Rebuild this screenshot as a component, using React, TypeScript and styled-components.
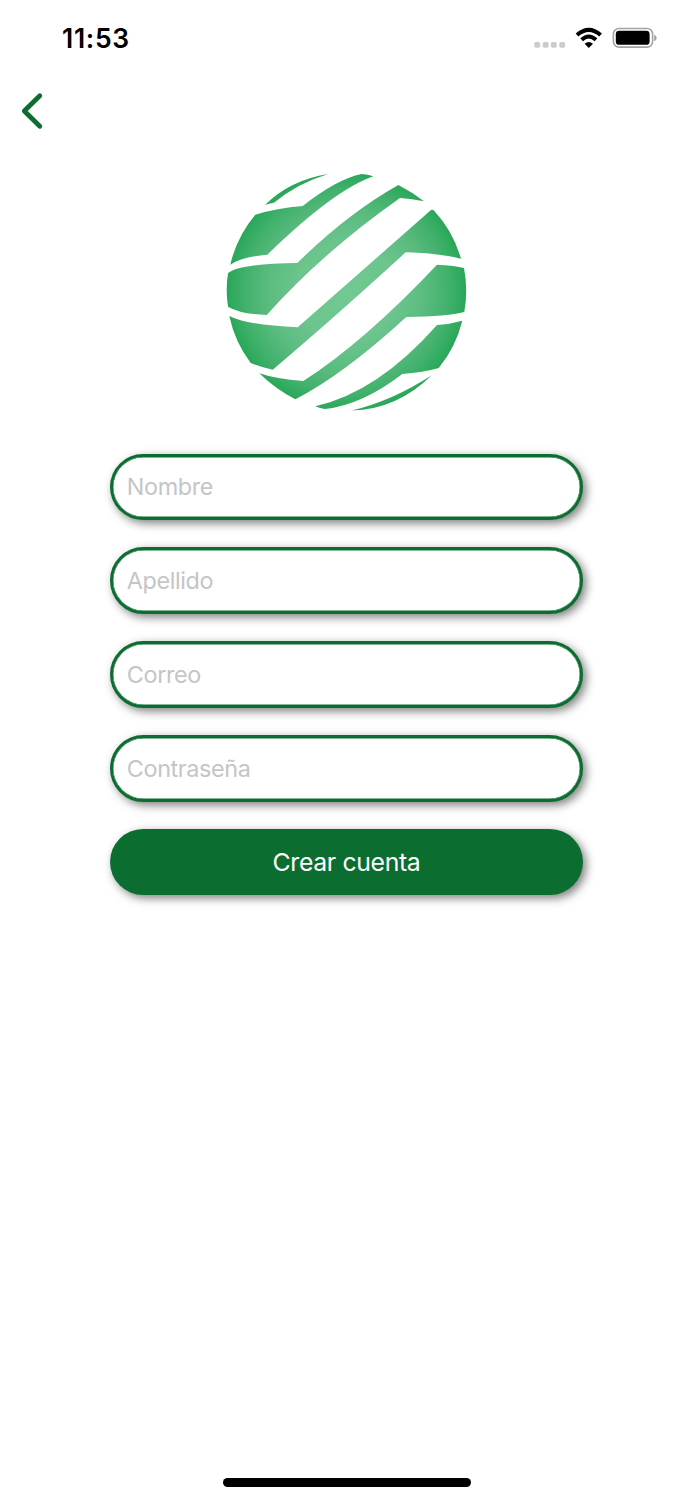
import React from "react";
import styled, { createGlobalStyle } from "styled-components";

const GREEN = "#0b6e30";
const FONT = `Inter, "Liberation Sans", sans-serif`;

const GlobalStyle = createGlobalStyle`
  *, *::before, *::after { box-sizing: border-box; }
  html, body { margin: 0; padding: 0; background: #fff; }
  body { font-family: ${FONT}; }
`;

const Screen = styled.main`
  width: 693px;
  height: 1500px;
  display: flex;
  flex-direction: column;
  overflow: hidden;
  background: #fff;
`;

const StatusBar = styled.header`
  height: 76px;
  padding: 0 36px 0 62px;
  display: flex;
  align-items: center;
  justify-content: space-between;
`;

const Clock = styled.time`
  font-size: 26.5px;
  line-height: 32px;
  font-weight: 600;
  letter-spacing: 0.7px;
  color: #000;
`;

const StatusIcons = styled.div`
  display: flex;
  align-items: center;
`;

const BackButton = styled.button`
  width: 60px;
  height: 70px;
  padding: 0 0 0 20px;
  border: 0;
  background: none;
  display: flex;
  align-items: center;
`;

const LogoArea = styled.div`
  margin-top: 27px;
  display: flex;
  justify-content: center;
`;

const Form = styled.form`
  width: 473.4px;
  margin: 41.5px auto 0;
  display: flex;
  flex-direction: column;
  gap: 26.8px;
`;

const Field = styled.input`
  width: 100%;
  height: 66.96px;
  padding: 0 14px;
  border: 3px solid ${GREEN};
  border-radius: 34px;
  background: #fff;
  box-shadow: inset 0 0 0 0.4px ${GREEN}, 3.3px 3.3px 10px rgba(0, 0, 0, 0.5);
  font-family: ${FONT};
  font-size: 23.4px;
  letter-spacing: -0.38px;
  outline: none;
  &::placeholder {
    color: #c5c5c6;
    opacity: 1;
  }
`;

const SubmitButton = styled.button`
  width: 100%;
  height: 66.96px;
  padding: 0;
  border: 0;
  border-radius: 34px;
  background: ${GREEN};
  box-shadow: 3.3px 3.3px 10px rgba(0, 0, 0, 0.5);
  color: #fff;
  font-family: ${FONT};
  font-size: 24.8px;
  letter-spacing: -0.35px;
`;

const HomeIndicator = styled.div`
  width: 248px;
  height: 8.5px;
  margin: auto auto 13.5px;
  border-radius: 5px;
  background: #000;
`;

const fields = [
  { label: "Nombre", type: "text" },
  { label: "Apellido", type: "text" },
  { label: "Correo", type: "email" },
  { label: "Contraseña", type: "password" },
];

const globeBands = [
  "M265 205 Q290 180 328.3 174 Q298 183 274 202.7 Q269 203.4 265 205Z",
  "M255.3 214.7 Q277 208 302.7 206 Q337 179 361.7 174 Q368 174.6 373.3 176.3 Q334 190 267.3 254.7 Q242 257 230.3 264.7 A120 120 0 0 1 255.3 214.7Z",
  "M228 273.3 Q238 264 297.3 263 Q347 214 398.3 185 Q412 192 424 201.3 Q412 198.7 400 198 Q322 253 266.7 315 Q240 314 228 306.7 Q225.4 290 228 273.3Z",
  "M229.3 316 Q247 325 297.7 327.3 L431 210 Q432.5 209.4 433.7 210.3 A120 120 0 0 1 461 258.7 Q441 253.5 405.7 252.3 Q335 317 272.7 369.7 Q261 367.5 250.7 363 A120 120 0 0 1 229.3 316Z",
  "M259.3 373.3 Q276 379 303.3 381 Q364 342 437 264.7 Q452 265.2 464 268 Q468.3 290 464.3 312 Q448 316.3 406.3 317 Q343 375 295.3 399.3 Q276 389.5 259.3 373.3Z",
  "M315.3 406.3 Q378 392 437 325 Q450 324.2 462.3 320.7 A120 120 0 0 1 438.7 368 Q423 372.6 402.3 374 Q362 405 325 409 Q320 408.5 315.3 406.3Z",
  "M351.7 410.6 Q392 401 431.7 375.3 Q397 409.5 351.7 410.6Z",
];

function GlobeLogo() {
  return (
    <svg width="241" height="239" viewBox="226 173 241 239" aria-label="Logo">
      <defs>
        <radialGradient id="globe" gradientUnits="userSpaceOnUse" cx="346.5" cy="292" r="120">
          <stop offset="0" stopColor="#72c993" />
          <stop offset="0.4" stopColor="#6cc58d" />
          <stop offset="0.65" stopColor="#5bbc80" />
          <stop offset="0.85" stopColor="#42b16c" />
          <stop offset="1" stopColor="#27a758" />
        </radialGradient>
      </defs>
      {globeBands.map((d) => (
        <path key={d} d={d} fill="url(#globe)" />
      ))}
    </svg>
  );
}

function StatusGlyphs() {
  return (
    <svg width="124" height="24" viewBox="533 26 124 24" aria-hidden="true">
      <g fill="#ccc">
        {[534.2, 542.6, 550.8, 559.2].map((x) => (
          <rect key={x} x={x} y="42" width="6" height="5.8" rx="1.8" />
        ))}
      </g>
      <g fill="none" stroke="#000" strokeWidth="4">
        <path d="M577 35 Q588.8 24.6 600.6 35" />
        <path d="M581.6 39.8 Q588.8 33.2 596 39.8" />
      </g>
      <path d="M584.6 43.8 Q588.8 40.4 593 43.8 L588.8 48Z" fill="#000" />
      <rect x="613.4" y="28.5" width="39.2" height="18.6" rx="5.5" fill="none" stroke="#a3a3a3" strokeWidth="1.6" />
      <rect x="615.8" y="30.8" width="33.8" height="14" rx="3.4" fill="#000" />
      <path d="M654.2 34.7 Q656.7 35.8 656.7 38 Q656.7 40.2 654.2 41.2Z" fill="#a3a3a3" />
    </svg>
  );
}

export default function App() {
  return (
    <>
      <GlobalStyle />
      <Screen>
        <StatusBar>
          <Clock>11:53</Clock>
          <StatusIcons>
            <StatusGlyphs />
          </StatusIcons>
        </StatusBar>
        <BackButton aria-label="Volver">
          <svg width="24" height="38" viewBox="20 92 24 38">
            <path d="M39.8 95.8 L24.3 111 L39.8 126.2" fill="none" stroke={GREEN} strokeWidth="4.8" strokeLinecap="round" strokeLinejoin="round" />
          </svg>
        </BackButton>
        <LogoArea>
          <GlobeLogo />
        </LogoArea>
        <Form onSubmit={(e) => e.preventDefault()}>
          {fields.map((f) => (
            <Field key={f.label} type={f.type} placeholder={f.label} />
          ))}
          <SubmitButton type="submit">Crear cuenta</SubmitButton>
        </Form>
        <HomeIndicator />
      </Screen>
    </>
  );
}
